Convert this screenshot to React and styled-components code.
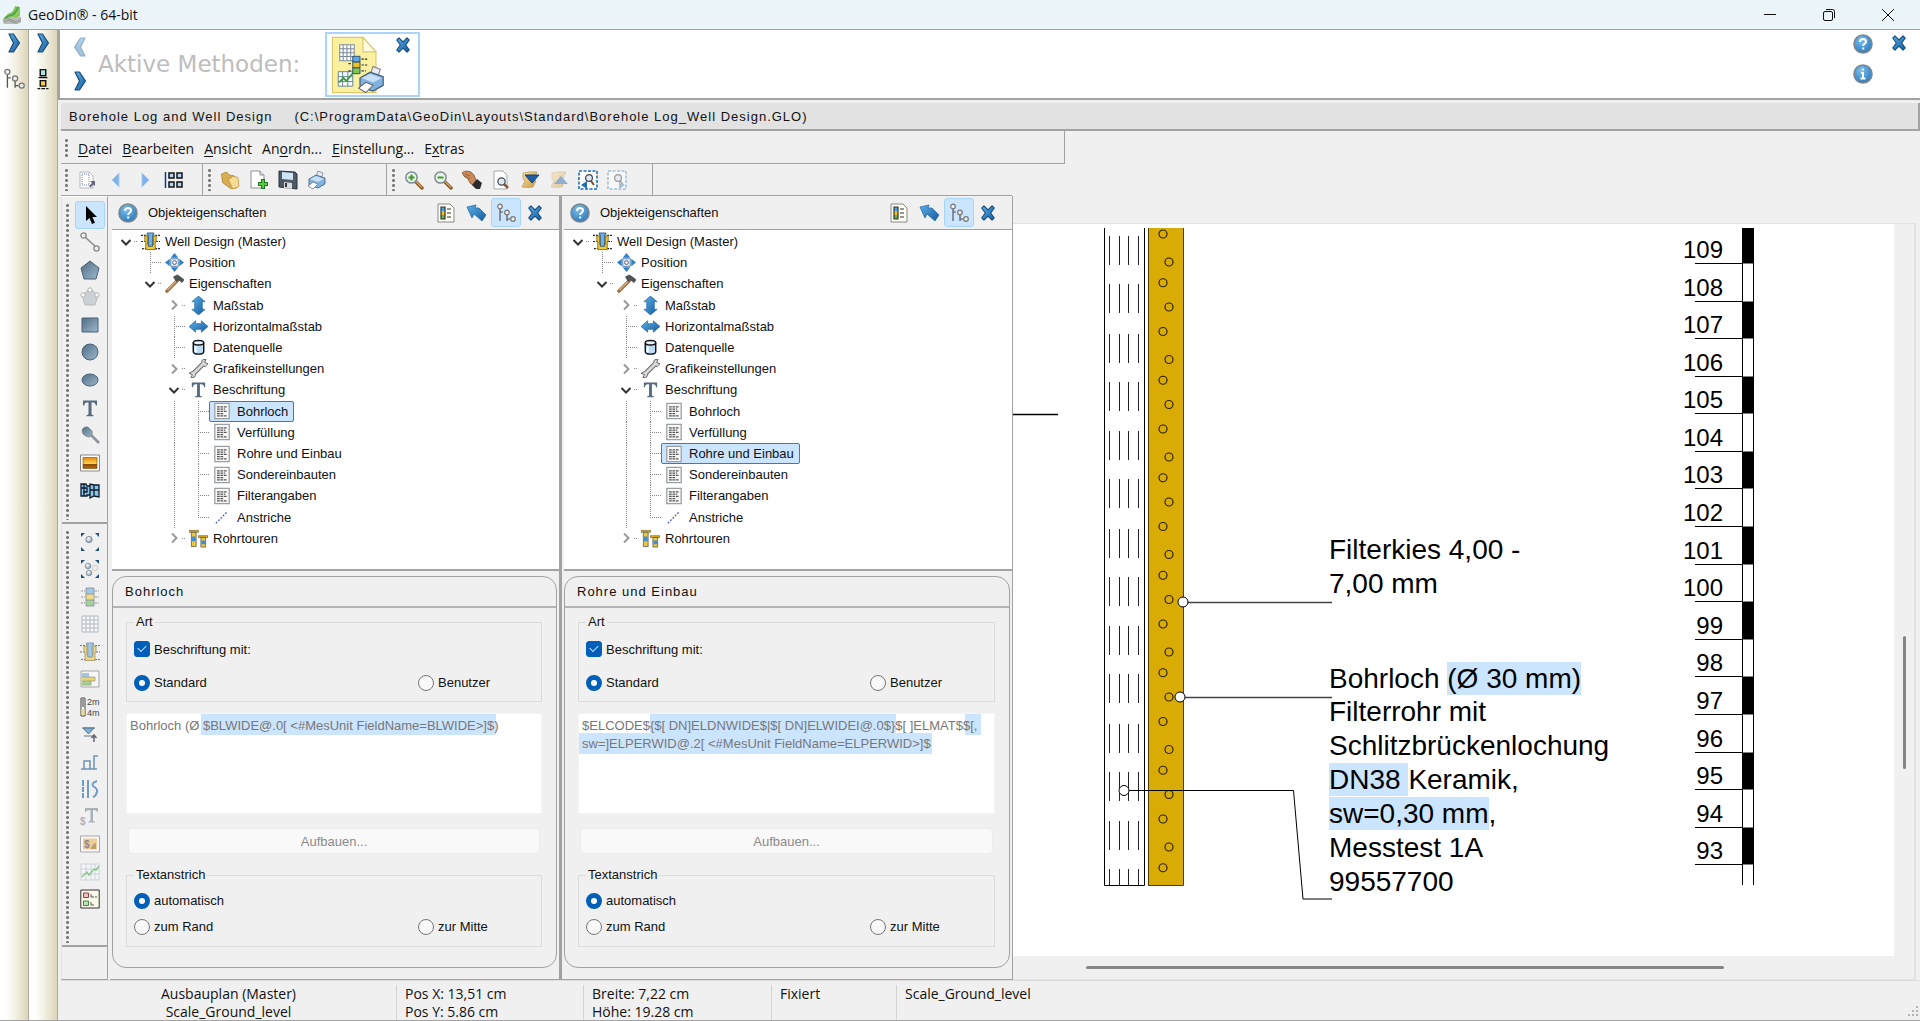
import React, { useState } from "react";
import styled, { createGlobalStyle, css } from "styled-components";

const UI = '"Open Sans", "Noto Sans", sans-serif';
const ARIAL = '"Liberation Sans", Arial, sans-serif';
const LINE = "#a2a2a2";
const FACE = "#f0f0f0";
const MARK = "#cce5ff";

const GlobalStyle = createGlobalStyle`
  *, *::before, *::after { box-sizing: border-box; }
  body { margin: 0; background: ${FACE}; color: #111; font-family: ${ARIAL}; font-size: 13px; }
  button, input, textarea { font: inherit; color: inherit; }
  button { background: none; border: 0; padding: 0; margin: 0; }
  svg { display: block; flex: none; }
`;

/* ---------- icons ---------- */

const Defs = () => (
  <svg width="0" height="0" style={{ position: "absolute" }} aria-hidden="true">
    <defs>
      <linearGradient id="blue" x1="0" y1="0" x2="1" y2="1">
        <stop offset="0" stopColor="#5bb0e8" /><stop offset="1" stopColor="#165a9c" />
      </linearGradient>
      <linearGradient id="slate" x1="0" y1="0" x2="1" y2="1">
        <stop offset="0" stopColor="#4f6d85" /><stop offset="1" stopColor="#9db8cc" />
      </linearGradient>
      <linearGradient id="gold" x1="0" y1="0" x2="1" y2="1">
        <stop offset="0" stopColor="#f8e3a8" /><stop offset="1" stopColor="#c9963c" />
      </linearGradient>
      <linearGradient id="sunset" x1="0" y1="0" x2="0" y2="1">
        <stop offset="0" stopColor="#e08a10" /><stop offset=".55" stopColor="#ffd24a" />
        <stop offset=".62" stopColor="#8a4a08" /><stop offset="1" stopColor="#b86a10" />
      </linearGradient>
      <radialGradient id="ball" cx=".4" cy=".3" r=".8">
        <stop offset="0" stopColor="#7cc0f0" /><stop offset="1" stopColor="#2273b8" />
      </radialGradient>
      <radialGradient id="pearl" cx=".4" cy=".35" r=".7">
        <stop offset="0" stopColor="#fff" /><stop offset="1" stopColor="#8094a6" />
      </radialGradient>
    </defs>
  </svg>
);

const wellPipe = (
  <>
    <path d="M0 3.500h5M0 10h4M1 17.500h4M15 3.500h5M16 10h4M15 17.500h5" stroke="#222" strokeWidth="1.200" strokeDasharray="2 1" fill="none" />
    <path d="M4 4h3v9h6V4h3v6h-1v8.500H5V10H4z" fill="#f0c830" stroke="#6b5410" strokeWidth=".8" />
    <path d="M6.500 1h7v2h-1.300v12H7.800V3H6.500z" fill="#6db2e6" stroke="#24486b" strokeWidth=".8" />
  </>
);
const printer = (
  <>
    <path d="M9 7l2-6 5 2-2 6z" fill="#e8ecf0" stroke="#778" strokeWidth=".7" />
    <path d="M2 9l7-4 9 3v6l-7 4-9-3z" fill="#7fb2df" stroke="#3d5a78" strokeWidth=".8" />
    <path d="M3 9l6-3 8 3-6 3z" fill="#c8def2" />
    <path d="M1 16l5-4 5 2-5 5z" fill="#fff" stroke="#667" strokeWidth=".7" />
  </>
);
const lens = (sign) => (
  <>
    <path d="M11 11l7 7" stroke="#8a5a28" strokeWidth="3.400" strokeLinecap="round" />
    <path d="M11.500 11l6 6" stroke="#d9a566" strokeWidth="1.200" strokeLinecap="round" />
    <circle cx="7.500" cy="7.500" r="5.600" fill="#eaf5ea" stroke="#7d8a92" strokeWidth="1.500" />
    {sign && <path d={sign} stroke="#3a9a2e" strokeWidth="2" />}
  </>
);
const smallLens = (
  <>
    <path d="M13 11l3 4" stroke="#7a4a28" strokeWidth="2" />
    <circle cx="11" cy="8" r="3.400" fill="#dfeaf4" stroke="#445" strokeWidth="1.200" />
  </>
);
const layer = (
  <path d="M3 3q7-2 14-1l-3 7 2 2-3 6q-6 1-11 0l3-6-2-2z" fill="url(#gold)" stroke="#b98a4a" strokeWidth=".6" />
);
const logColumn = (
  <>
    <path d="M1 4h4M1 10h4M1 16h4M15 4h4M15 10h4M15 16h4" stroke="#555" strokeDasharray="2 1" />
    <path d="M6 1h8v6H6z" fill="#6db2e6" /><path d="M6 7h8v6H6z" fill="#f0d040" /><path d="M6 13h8v6H6z" fill="#76c060" />
    <path d="M6 1h8v18H6zM6 7h8M6 13h8" fill="none" stroke="#446" strokeWidth=".8" />
  </>
);
const corners = (
  <path d="M1 5V1h4zM15 1h4v4zM19 15v4h-4zM5 19H1v-4z" fill="#24507c" />
);

const shapes = {
  logo: (<>
    <path d="M1 13l8-3 10 2v5l-6 2H2z" fill="#b9bdb8" />
    <path d="M1 15q5-3 9 0t9-1M1 17q6-3 10 0t8-1" stroke="#85898a" fill="none" strokeWidth=".8" />
    <path d="M2 14q3-6 6-6 3-1 5-7l5 1v9q-4 2-7 1-5 0-9 3z" fill="#8cc95a" />
    <path d="M3 13q5-3 7-3 4-2 6-8" stroke="#3fa34a" strokeWidth="1.600" fill="none" />
  </>),
  chevron: <path d="M5 1h4.500l6 9-6 9H5l4.500-9z" fill="url(#blue)" stroke="#1b4a78" strokeWidth="1.200" strokeLinejoin="round" />,
  nodes: (<>
    <path d="M4 6v12M4 9h3M11 12v6M11 16h3" stroke="#555" fill="none" strokeWidth="1.200" />
    <g fill="#eee" stroke="#777" strokeWidth="1.200"><circle cx="4" cy="3.500" r="2.300" /><circle cx="11" cy="9.500" r="2.300" /><circle cx="17" cy="16" r="2.300" /></g>
  </>),
  column: (<>
    <path d="M6 8.700h8M5 18.700h2.500M13 18.700h2M8.500 18.700h3.500" stroke="#111" strokeWidth="1.200" />
    <path d="M7.500 1.500h5V7h-5z" fill="#a7e6e0" stroke="#111" strokeWidth="1.300" /><path d="M7.500 11.500h5v5h-5z" fill="#ffc83c" stroke="#111" strokeWidth="1.300" />
  </>),
  close: <path d="M3 4.500L5.500 2 10 6.500 14.500 2 17 4.500 13 10l4 5.500-2.500 2.500L10 13.500 5.500 18 3 15.500 7 10z" fill="url(#blue)" stroke="#154a7c" strokeWidth="1.200" strokeLinejoin="round" />,
  help: (<>
    <circle cx="10" cy="10" r="9" fill="url(#ball)" stroke="#7b868e" strokeWidth="1.600" />
    <path d="M7 8q0-3 3-3t3 2.600q0 1.400-1.600 2.200Q10.200 10.500 10.200 12M10.200 13.600v2" stroke="#fff" strokeWidth="2" fill="none" />
  </>),
  info: (<>
    <circle cx="10" cy="10" r="9" fill="url(#ball)" stroke="#7b868e" strokeWidth="1.600" />
    <path d="M10 4.500v2M8 9h2v5M7.500 14.500h5" stroke="#fff" strokeWidth="2" fill="none" />
  </>),
  method: (<>
    <path d="M.5.500h10.500l4.500 5v14H.500z" fill="#fbf0a0" stroke="#d8c870" strokeWidth=".4" />
    <path d="M11 .5v5h4.500z" fill="#fffbe0" stroke="#d8c870" strokeWidth=".4" />
    <path d="M3 3h5v5.500H3zM4.200 3v5.500M5.500 3v5.500M6.800 3v5.500M3 4.400h5M3 5.800h5M3 7.100h5" fill="#fff" stroke="#7a8a98" strokeWidth=".35" />
    <path d="M2.500 12.300h5v5h-5zM4 12.300v5M5.800 12.300v5M2.500 14h5M2.500 15.700h5" fill="#f4fafc" stroke="#5a7a88" strokeWidth=".3" />
    <path d="M2.800 16l1.500-1.500 1 1 2-2.500" stroke="#3c9a3c" strokeWidth=".6" fill="none" />
    <path d="M7.500 7h2.500v2H7.500z" fill="#5aa8e6" stroke="#246" strokeWidth=".3" />
    <path d="M7.500 9h2.500v2H7.500z" fill="#f2c21c" stroke="#246" strokeWidth=".3" />
    <path d="M7.500 11h2.500v2H7.500z" fill="#7cc850" stroke="#246" strokeWidth=".3" />
    <path d="M10.500 8h2M10.500 10h2M10.500 12h1.500M6 9.500h1.200M6 12h1.200" stroke="#333" strokeWidth=".4" strokeDasharray=".8 .4" />
    <g transform="translate(9 10) scale(.5)">{printer}</g>
  </>),
  newPage: (<>
    <path d="M3 2h9l4 4v12H3z" fill="#fff" stroke="#b5bbc4" />
    <path d="M5 4h7v11H5z" fill="none" stroke="#6c78d8" strokeDasharray="1 1" />
    <path d="M18 11v5l-1.500-1.500-3 3-1.500-1.500 3-3L13 11z" fill="#667" />
  </>),
  prev: <path d="M13 3v14L6 10z" fill="#7fb2ea" stroke="#a9caf0" />,
  next: <path d="M7 3v14l7-7z" fill="#7fb2ea" stroke="#a9caf0" />,
  gridView: (<>
    <path d="M1.500 2v16" stroke="#1030a0" strokeWidth="1.500" />
    <path d="M5 3h5v5H5zM13 3h5v5h-5zM5 12h5v5H5zM13 12h5v5h-5z" fill="#b8d4f4" stroke="#111" strokeWidth="1.500" />
  </>),
  open: (<>
    <path d="M1.500 4l5-2 3 3 5 1 2 12-6 .5-8-6z" fill="#d9ae50" stroke="#a67a28" strokeWidth=".7" />
    <path d="M8 9l3-1 1-2 6 1.500 1 9-6 2.500z" fill="#f7dc96" stroke="#b98d3c" strokeWidth=".7" />
  </>),
  addPage: (<>
    <path d="M2 1h9l4 4v13H2z" fill="#fff" stroke="#8a8f96" /><path d="M11 1v4h4" fill="#dde" stroke="#8a8f96" />
    <path d="M14 9v10M9 14h10" stroke="#1f7a1f" strokeWidth="4" /><path d="M14 10v8M10 14h8" stroke="#58c840" strokeWidth="2" />
  </>),
  save: (<>
    <path d="M1 1l16 1 2 2v15L1 17z" fill="#4d5964" stroke="#2c343c" /><path d="M4 2l11 1v7L4 9z" fill="#cfe4f6" />
    <path d="M6 12l8 1v6l-8-1z" fill="#d6dade" /><path d="M8 13v4" stroke="#333" strokeWidth="2" />
  </>),
  print: printer,
  zoomIn: lens("M7.500 4.500v6M4.500 7.500h6"),
  zoomOut: lens("M4.500 7.500h6"),
  hand: (<>
    <path d="M0 3q2-2 5-2l4 1 3 3 2 5-2 6-4-3-2-4-4-3z" fill="#c98a58" stroke="#7a4a24" strokeWidth=".7" />
    <path d="M3 4l5 2M2 6l6 3" stroke="#7a4a24" strokeWidth=".6" />
    <path d="M10 15l5-6 5 4-2 6h-4z" fill="#2c2c30" />
  </>),
  pageLens: (<>
    <path d="M3 1h9l4 4v14H3z" fill="#fff" stroke="#a3a8ae" /><path d="M13 14l4 4" stroke="#8a5a38" strokeWidth="2.500" />
    <circle cx="10.500" cy="11.500" r="3.600" fill="#dfeaf4" stroke="#445" strokeWidth="1.200" />
  </>),
  layerDown: <>{layer}<path d="M5 5h14l-7 8z" fill="#1f5fa8" stroke="#123f74" /></>,
  layerUp: <g opacity=".45">{layer}<path d="M5 14h14l-7-8z" fill="#1f5fa8" /></g>,
  zoomPrev: (<>
    <path d="M1 1h18v18H1z" fill="#fff" stroke="#1f6fb4" strokeDasharray="3 1.500" strokeWidth="1.600" />
    {smallLens}<path d="M9 11v8l-6-4z" fill="#1f6fb4" />
  </>),
  zoomNext: (<g opacity=".5">
    <path d="M1 1h18v18H1z" fill="#fff" stroke="#5a92c4" strokeDasharray="3 1.500" strokeWidth="1.600" />
    {smallLens}<path d="M12 11v8l6-4z" fill="#5a92c4" />
  </g>),
  pointer: <path d="M6 1v15l3.500-3 2.500 6 3-1.200-2.600-5.800h4.600z" fill="#000" />,
  segment: (<>
    <path d="M4 4l13 12" stroke="#888" strokeWidth="1.500" />
    <circle cx="3.500" cy="3.500" r="2.600" fill="#eee" stroke="#888" strokeWidth="1.300" /><circle cx="16.500" cy="16.500" r="2.600" fill="#eee" stroke="#888" strokeWidth="1.300" />
  </>),
  pentagon: <path d="M10 1l9 7-3 11H4L1 8z" fill="url(#slate)" stroke="#4a6074" />,
  pentagonEdit: (<g opacity=".6">
    <path d="M10 2l8 6-3 10H5L2 8z" fill="#b4bcc2" stroke="#999" />
    <circle cx="10" cy="3" r="2.200" fill="#fff" stroke="#888" /><circle cx="3" cy="8" r="2.200" fill="#fff" stroke="#888" /><circle cx="17" cy="8" r="2.200" fill="#fff" stroke="#888" />
  </g>),
  rect: <path d="M2 3h16v14H2z" fill="url(#slate)" stroke="#4a6074" />,
  circle: <circle cx="10" cy="10" r="8" fill="url(#slate)" stroke="#4a6074" />,
  ellipse: <ellipse cx="10" cy="10" rx="8" ry="6" fill="url(#slate)" stroke="#4a6074" />,
  letter: <path d="M3 2.500h14v5h-1.200q-.3-3-2.800-3h-1.500v11.500q0 1 2 1.200v1H6.500v-1q2-.2 2-1.200V4.500H7q-2.500 0-2.800 3H3z" fill="#566b7f" />,
  pin: (<>
    <path d="M10 9l9 9" stroke="#8b949c" strokeWidth="2.500" />
    <path d="M2 5q2-4 6-3l4 4q1 5-3 6-3 0-6-3z" fill="url(#slate)" stroke="#777" strokeWidth=".7" />
  </>),
  picture: <><path d="M.5 2h19v16H.500z" fill="#fff" stroke="#888" /><path d="M3 4.500h14v11H3z" fill="url(#sunset)" stroke="#704808" strokeWidth=".6" /></>,
  film: <path d="M1 4h5l1 2h3V4l4 1h5v12l-5-1-4 2v-3H7v1H1zM1 8h6v4H3M10 6v10M10 10h9M14 5v11M4 4v12" fill="#8cc4ec" stroke="#0c1a28" strokeWidth="1.300" />,
  focusOne: <>{corners}<circle cx="9" cy="7.500" r="3.200" fill="url(#pearl)" stroke="#678" strokeWidth=".7" /></>,
  focusMany: (<>{corners}
    <g stroke="#678" strokeWidth=".6"><circle cx="8" cy="7" r="2.800" fill="url(#pearl)" /><circle cx="9" cy="14" r="2.800" fill="url(#pearl)" /><circle cx="15" cy="9" r="2.800" fill="#eee" stroke="#bbb" /></g>
  </>),
  logColumn,
  table: <path d="M2 2h16v16H2zM6 2v16M10 2v16M14 2v16M2 6h16M2 10h16M2 14h16" fill="#fdfdfd" stroke="#8494a4" />,
  wellPipe,
  bars: (<>
    <path d="M1 2h18v16H1z" fill="#fafafa" stroke="#777" />
    <path d="M2 4h7v4H2z" fill="#6cacdc" /><path d="M2 8h13v4H2z" fill="#e4c020" /><path d="M2 12h9v4H2z" fill="#6cc050" />
    <path d="M2 8h13v4H2M2 16h9v-4" fill="none" stroke="#6a6a40" strokeWidth=".8" />
  </>),
  scale: (<>
    <path d="M1 1h4v18H1z" fill="#fff" stroke="#444" /><path d="M1.500 2h3v8h-3z" fill="#999" /><path d="M1.500 12h3v6h-3z" fill="#f2dc90" />
    <text x="7" y="8" fontFamily={ARIAL} fontSize="9" fill="#444">2m</text><text x="7" y="19" fontFamily={ARIAL} fontSize="9" fill="#444">4m</text>
  </>),
  level: (<>
    <path d="M2 4h13M4 12h9" stroke="#678" strokeWidth="1.200" /><path d="M3 4h11l-5.500 6z" fill="#7fb0d4" stroke="#4a7090" />
    <path d="M14 18v-6M11.500 14l2.500-3 2.500 3" stroke="#667" strokeWidth="1.500" fill="none" />
  </>),
  steps: <path d="M1 17h16M4 17V9h6v8M14 17V4h4" fill="none" stroke="#6f94b4" strokeWidth="1.500" />,
  curve: <path d="M3 1v6M3 8v5M3 14v5M8 1v18M17 2q-6 2-4 5 5 3 4 6-1 4-4 5" fill="none" stroke="#6f9cc4" strokeWidth="2" />,
  dollarText: (<g fill="#7c8894">
    <path d="M5 1h13v4h-1q0-2-3.500-2h-.5v10q0 1.500 2 1.500v1H8.500v-1q2 0 2-1.500V3Q6 3 6 5H5z" />
    <text x="0" y="18" fontFamily={ARIAL} fontSize="10" fontWeight="700">$</text>
  </g>),
  dollarImage: (<>
    <path d="M.5 2h19v16H.500z" fill="#fff" stroke="#777" /><path d="M3 4.500h14v11H3z" fill="#e8b860" />
    <path d="M11 14q2-5 5-5v6h-5z" fill="#a06a20" /><text x="4" y="14" fontFamily={ARIAL} fontSize="10" fontWeight="700" fill="#445">$</text>
  </>),
  chart: <><path d="M1 2h18v16H1zM6 2v16M11 2v16M15 2v16M1 7h18M1 12h18" fill="#f4f8fa" stroke="#a8b8c0" strokeWidth=".8" /><path d="M2 15l5-5 2 3 5-6 2 1 3-4" fill="none" stroke="#4aa84a" strokeWidth="1.400" /></>,
  legend: (<>
    <path d="M.8 1h18.400v18H.800z" fill="#fbf9e8" stroke="#333" />
    <path d="M3.500 4h5v4.500h-5z" fill="#f2c0c0" stroke="#844" /><path d="M3.500 12h5v4.500h-5z" fill="#b8e4b8" stroke="#484" />
    <path d="M11 5v3h3M11 13v3h3M15 8h2" stroke="#555" fill="none" />
  </>),
  props: (<>
    <path d="M2 1h12l4 4v14H2z" fill="#fffef4" stroke="#888" /><path d="M5 4h4v4H5z" fill="#4aa8e8" /><path d="M5 8h4v4H5z" fill="#f2c21c" /><path d="M5 12h4v4H5z" fill="#5cb848" />
    <path d="M5 4h4v12H5zM11 6h4M11 10h4M11 14h4" stroke="#333" fill="none" strokeWidth="1.200" />
  </>),
  arrow: <path d="M1 4l9-2-1 3h4l7 7-4 6-8-7-2 4z" fill="url(#blue)" stroke="#2a6aa8" strokeWidth=".8" />,
  position: (<>
    <path d="M10 0l4 5H6zM10 20l4-5H6zM0 10l5-4v8zM20 10l-5-4v8z" fill="#2f7fc4" /><path d="M6 6h8v8H6z" fill="#e4eef6" stroke="#5a8ab4" />
    <circle cx="10" cy="10" r="2" fill="#fff" stroke="#556" />
  </>),
  hammer: (<>
    <path d="M2 18L13 7" stroke="#9c6c3c" strokeWidth="3.600" strokeLinecap="round" /><path d="M2.500 17L13 6.500" stroke="#e2b888" strokeWidth="1.300" />
    <path d="M9 3l4-2 3 2 4 3-2 3-4-3-2 2-2-3z" fill="#50555a" stroke="#26282a" strokeWidth=".6" />
  </>),
  vertical: <path d="M10 0l7 6h-3v8h3l-7 6-7-6h3V6H3z" fill="url(#blue)" stroke="#2a70b0" strokeWidth=".8" />,
  horizontal: <path d="M0 10l7-6v3h6V4l7 6-7 6v-3H7v3z" fill="url(#blue)" stroke="#2a70b0" strokeWidth=".8" />,
  database: (<>
    <path d="M4.500 5v9.500q0 2.500 5.500 2.500t5.500-2.500V5" fill="#bcdcf6" stroke="#111" strokeWidth="1.500" /><ellipse cx="10" cy="5" rx="5.500" ry="2.300" fill="#e8f4fc" stroke="#111" strokeWidth="1.500" />
    <path d="M7 9v6" stroke="#fff" strokeWidth="2" />
  </>),
  wrench: (<>
    <path d="M5 15L15 5" stroke="#666" strokeWidth="5" />
    <path d="M0 15l4-2 3 3-1 3-4 1 1.500-3.500zM13 5l1-4 4-1-1.500 3.500L20 5l-3 3-3-1z" fill="#d8d8d8" stroke="#666" />
    <path d="M4.500 15.500L15.500 4.500" stroke="#d8d8d8" strokeWidth="3" />
  </>),
  textBlock: (<>
    <path d="M2 1.500h16v17H2z" fill="#f8f8f8" stroke="#9a9fa4" strokeWidth="1.400" />
    <path d="M4.500 5.500h11M4.500 8h9M4.500 10.500h11M4.500 13h7M4.500 15.500h11" stroke="#555" strokeWidth="1.300" strokeDasharray="3 .8" />
  </>),
  dashed: <path d="M3 16L15 4" stroke="#4858c0" strokeWidth="1.300" strokeDasharray="2 1.500" />,
  casings: (<>
    <path d="M0 1.500h10v2H0zM10 7h10v2H10z" fill="#d8a818" stroke="#6b5410" strokeWidth=".6" />
    <path d="M2.500 3.500h5v15h-5zM12.500 9h5v10h-5z" fill="#f0c830" stroke="#555" strokeWidth=".8" /><path d="M3 8h4v5H3zM13 12h4v4h-4z" fill="#3f8fd8" />
  </>),
};

const Icon = ({ name, size = 20 }) => (
  <svg width={size} height={size} viewBox="0 0 20 20" aria-hidden="true">{shapes[name]}</svg>
);

/* ---------- window frame ---------- */

const Window = styled.div`
  height: 100vh;
  min-height: 1020px;
  display: flex;
  flex-direction: column;
  overflow: hidden;
  border-bottom: 1px solid ${LINE};
`;
const TitleBar = styled.header`
  height: 30px;
  display: flex;
  align-items: center;
  gap: 6px;
  padding: 0 25px 0 2px;
  background: #ebf4f8;
  border-bottom: 1px solid ${LINE};
  font-family: ${UI};
  font-size: 14px;
`;
const Title = styled.h1`
  flex: 1;
  margin: 0;
  font-size: 14px;
  font-weight: 400;
`;
const WindowButtons = styled.div`
  display: flex;
  gap: 45px;
`;
const Body = styled.div`
  flex: 1;
  display: flex;
  min-height: 0;
`;
const SideStrip = styled.aside`
  width: 29px;
  display: flex;
  flex-direction: column;
  align-items: center;
  gap: 15px;
  padding-top: 3px;
  border-right: 1px solid #a9a9a0;
  background: linear-gradient(90deg, #fff 20%, #f3f1e4 55%, #ddd8bc 95%);
`;
const Main = styled.main`
  flex: 1;
  min-width: 0;
  display: flex;
  flex-direction: column;
  padding-left: 3px;
`;
const MethodBar = styled.section`
  height: 70px;
  margin-left: -3px;
  display: flex;
  align-items: center;
  background: #fff;
  border: solid ${LINE};
  border-width: 0 0 2px 2px;
  padding: 0 10px;
`;
const Stack = styled.div`
  display: flex;
  flex-direction: column;
  gap: 14px;
`;
const Flip = styled.button`
  opacity: 0.45;
  transform: scaleX(-1);
`;
const MethodTitle = styled.h2`
  margin: 0 25px 0 8px;
  color: #bdbdbd;
  font: 400 23px/28px "DejaVu Sans", sans-serif;
`;
const MethodCard = styled.div`
  display: flex;
  width: 95px;
  height: 65px;
  padding: 2px 6px 3px 4px;
  justify-content: space-between;
  align-items: flex-start;
  border: 2px solid #abd4fa;
`;
const CornerTools = styled.div`
  align-self: flex-start;
  margin: 4px 0 0 auto;
  display: grid;
  grid-template-columns: 20px 20px;
  gap: 10px 17px;
`;
const Caption = styled.h3`
  margin: 3px 0 0;
  height: 28px;
  padding: 0 8px;
  display: flex;
  align-items: center;
  gap: 22px;
  background: #e2e2e2;
  border: 1px solid ${LINE};
  border-width: 0 2px 2px 0;
  font-size: 13px;
  font-weight: 400;
  letter-spacing: 1px;
`;
const Grip = styled.span`
  width: 3px;
  align-self: stretch;
  margin: ${(p) => p.$inset || 4}px 0;
  background: radial-gradient(circle, #777 1px, transparent 2px) 0 0 / 3px 5px repeat-y;
`;
const MenuBar = styled.nav`
  height: 33px;
  width: 1004px;
  max-width: 100%;
  display: flex;
  align-items: center;
  gap: 10px;
  padding: 3px 0 0 4px;
  border: 1px solid ${LINE};
  border-width: 0 1px 1px 0;
  font-family: ${UI};
  font-size: 14px;
  button { text-underline-offset: 2px; }
`;
const ToolRow = styled.div`
  height: 32px;
  width: 951px;
  display: flex;
  border-bottom: 1px solid ${LINE};
`;
const ToolGroup = styled.div`
  width: ${(p) => p.$width}px;
  display: flex;
  align-items: center;
  gap: 9px;
  padding-left: ${(p) => p.$pad || 4}px;
  border-right: 1px solid ${LINE};
`;
const Workspace = styled.div`
  flex: 1;
  min-height: 0;
  display: flex;
  border-bottom: 1px solid #dcdcdc;
`;

/* ---------- palette ---------- */

const Palette = styled.div`
  width: 47px;
  margin-right: 2px;
  display: flex;
  flex-direction: column;
  border: 1px solid ${LINE};
  border-top-color: #fff;
  border-left-color: #e4e4e4;
`;
const PaletteGroup = styled.div`
  display: flex;
  gap: 6px;
  height: ${(p) => p.$height}px;
  padding: 4px 0 0 4px;
  border-bottom: 2px solid ${LINE};
`;
const PaletteGrid = styled.div`
  display: grid;
  height: ${(p) => p.$height}px;
  width: 30px;
  grid-auto-rows: 1fr;
`;
const ToolButton = styled.button`
  display: grid;
  place-items: center;
  border: 1px solid transparent;
  border-radius: 3px;
  ${(p) => p.$on && css`background: ${MARK}; border-color: #a6d4fa;`}
  ${(p) => p.$faded && css`opacity: 0.6;`}
`;

/* ---------- property panels ---------- */

const Panel = styled.section`
  width: ${(p) => (p.$last ? 451 : 452)}px;
  padding-left: 2px;
  display: flex;
  flex-direction: column;
  border: solid ${LINE};
  border-width: 0 ${(p) => (p.$last ? 1 : 3)}px 1px 0;
`;
const PanelHeader = styled.header`
  height: 34px;
  display: flex;
  align-items: center;
  gap: 10px;
  padding: 0 15px 0 6px;
  border-bottom: 1px solid ${LINE};
`;
const PanelTitle = styled.h2`
  flex: 1;
  margin: 0;
  font-size: 13px;
  font-weight: 400;
`;
const HeaderButton = styled(ToolButton)`
  width: 30px;
  height: 29px;
  margin: 0 -5px;
`;
const HeaderTools = styled.div`
  display: flex;
  align-items: center;
  gap: 10px;
`;
const Tree = styled.ul`
  margin: 0;
  padding: 1px 0 20px 2px;
  height: 341px;
  list-style: none;
  display: grid;
  grid-auto-rows: 1fr;
  background: #fff;
  border-bottom: 2px solid ${LINE};
`;
const TreeRow = styled.li`
  display: flex;
  align-items: stretch;
  min-height: 0;
`;
const Guide = styled.span`
  width: 24px;
  display: flex;
  align-items: center;
  justify-content: center;
  background-repeat: no-repeat;
  ${(p) => p.$kind === "line" && css`
    background-image: repeating-linear-gradient(#888 0 1px, transparent 1px 2px);
    background-size: 1px 100%;
    background-position: 12px 0;
  `}
  ${(p) => (p.$kind === "tee" || p.$kind === "end") && css`
    background-image: repeating-linear-gradient(#888 0 1px, transparent 1px 2px),
      repeating-linear-gradient(90deg, #888 0 1px, transparent 1px 2px);
    background-size: 1px ${p.$kind === "tee" ? "100%" : "50%"}, 12px 1px;
    background-position: 12px 0, 12px 50%;
  `}
  ${(p) => (p.$kind === "open" || p.$kind === "shut") && css`
    background-image: repeating-linear-gradient(90deg, #888 0 1px, transparent 1px 2px);
    background-size: 4px 1px;
    background-position: 20px 50%;
  `}
`;
const Node = styled.button`
  display: flex;
  align-items: center;
  gap: 4px;
  min-height: 0;
  padding: 0 5px 0 1px;
  border: 1px solid transparent;
  border-radius: 2px;
  margin-left: -1px;
  overflow: visible;
  ${(p) => p.$on && css`background: ${MARK}; border-color: #1c84dc;`}
`;
const NodeIcon = styled.span`
  width: 22px;
  display: grid;
  place-items: center;
`;
const Card = styled.form`
  margin: 5px 2px 11px 0;
  flex: 1;
  border: 1px solid ${LINE};
  border-radius: 14px;
`;
const CardTitle = styled.h3`
  margin: 0 0 5px;
  height: 31px;
  padding: 1px 12px 0;
  font-size: 13px;
  line-height: 28px;
  font-weight: 400;
  letter-spacing: 1px;
  border-bottom: 2px solid #b4b4b4;
`;
const CardBody = styled.div`
  padding: 0 14px 0 13px;
`;
const Group = styled.fieldset`
  margin: 0;
  min-width: 0;
  height: ${(p) => p.$height}px;
  padding: 0 7px;
  border: 1px solid #dcdcdc;
`;
const Legend = styled.legend`
  padding: 0 2px;
  line-height: 18px;
`;
const OptionRow = styled.div`
  display: grid;
  grid-template-columns: 284px 1fr;
  align-items: center;
  height: ${(p) => p.$height}px;
`;
const Option = styled.label`
  display: flex;
  align-items: center;
  gap: 4px;
`;
const Radio = styled.input.attrs({ type: "radio" })`
  appearance: none;
  width: 16px;
  height: 16px;
  margin: 0;
  border: 1px solid #777;
  border-radius: 50%;
  background: #f8f8f8;
  &:checked { border: 5px solid #005fb8; background: #fff; }
`;
const Check = styled.input.attrs({ type: "checkbox" })`
  appearance: none;
  width: 16px;
  height: 16px;
  margin: 0;
  display: grid;
  place-items: center;
  border: 1px solid #777;
  border-radius: 3px;
  &:checked { background: #005fb8; border-color: #005fb8; }
  &:checked::after {
    content: "";
    width: 8px;
    height: 5px;
    border: solid #cfe4f7;
    border-width: 0 0 1px 1px;
    transform: rotate(-45deg);
    margin-bottom: 3px;
  }
`;
const Formula = styled.textarea`
  display: block;
  width: 100%;
  height: 101px;
  margin: 11px 0 14px;
  padding: 3px 3px;
  border: 1px solid #f4f4f4;
  resize: none;
  outline: none;
  color: #777;
  line-height: 18px;
  background-color: #fff;
  background-repeat: no-repeat;
  background-image: ${(p) => p.$marks.map(() => `linear-gradient(${MARK}, ${MARK})`).join(",")};
  background-position: ${(p) => p.$marks.map((m) => `${m[0]}px ${m[1]}px`).join(",")};
  background-size: ${(p) => p.$marks.map((m) => `${m[2]}px ${m[3]}px`).join(",")};
`;
const BuildButton = styled.button`
  display: block;
  width: calc(100% - 4px);
  height: 26px;
  margin: 0 2px 12px;
  border: 1px solid #ececec;
  border-radius: 4px;
  background: #f9f9f9;
  color: #8a8a8a;
`;

/* ---------- drawing ---------- */

const CanvasFrame = styled.section`
  flex: 1;
  min-width: 0;
  margin: 27px 4px 0 0;
  border: solid #e2e2e2;
  border-width: 1px 2px 1px 0;
  display: grid;
  grid-template: 1fr 23px / 1fr 20px;
`;
const Sheet = styled.div`
  position: relative;
  overflow: hidden;
  background: #fff;
`;
const Label = styled.p`
  position: absolute;
  margin: 0;
  left: ${(p) => p.$x}px;
  top: ${(p) => p.$y}px;
  font-size: 28px;
  line-height: 34px;
  white-space: pre;
  color: #000;
`;
const Mark = styled.mark`
  padding: 1px 0;
  background: ${MARK};
  color: inherit;
`;
const ScrollTrack = styled.div`
  display: flex;
  flex-direction: ${(p) => (p.$vertical ? "column" : "row")};
  align-items: center;
  ${(p) => (p.$vertical ? "padding-top: 412px;" : "padding-left: 73px;")}
`;
const Thumb = styled.span`
  border-radius: 2px;
  background: #868686;
  ${(p) => (p.$vertical ? "width: 3px; height: 133px;" : "height: 3px; width: 79%;")}
`;

/* ---------- status ---------- */

const StatusBar = styled.footer`
  height: 39px;
  padding-top: 4px;
  display: flex;
  font: 14px/18px ${UI};
`;
const StatusCell = styled.div`
  width: ${(p) => p.$width}px;
  padding-left: ${(p) => (p.$center ? 0 : 8)}px;
  text-align: ${(p) => (p.$center ? "center" : "left")};
  border-right: ${(p) => (p.$open ? 0 : 1)}px solid #d4d4d4;
`;
const SizeGrip = styled.span`
  align-self: flex-end;
  margin: 0 2px 4px auto;
`;

/* ---------- data ---------- */

const toolbars = [
  { width: 142, gap: 4, items: ["newPage", "prev", "next", "gridView"] },
  { width: 184, gap: 5, items: ["open", "addPage", "save", "print"] },
  { width: 266, gap: 5, items: ["zoomIn", "zoomOut", "hand", "pageLens", "layerDown", "layerUp", "zoomPrev", "zoomNext"] },
];
const menus = [["", "D", "atei"], ["", "B", "earbeiten"], ["", "A", "nsicht"], ["An", "o", "rdn..."], ["", "E", "instellung..."], ["E", "x", "tras"]];
const drawTools = ["pointer", "segment", "pentagon", "pentagonEdit", "rect", "circle", "ellipse", "letter", "pin", "picture", "film"];
const objectTools = ["focusOne", "focusMany", "logColumn", "table", "wellPipe", "bars", "scale", "level", "steps", "curve", "dollarText", "dollarImage", "chart", "legend"];
const fadedTools = ["logColumn", "table", "wellPipe", "bars", "dollarText", "dollarImage", "chart"];
const treeRows = [
  [["open"], "wellPipe", "Well Design (Master)"],
  [["", "tee"], "position", "Position"],
  [["", "open"], "hammer", "Eigenschaften"],
  [["", "", "shut"], "vertical", "Maßstab"],
  [["", "", "tee"], "horizontal", "Horizontalmaßstab"],
  [["", "", "tee"], "database", "Datenquelle"],
  [["", "", "shut"], "wrench", "Grafikeinstellungen"],
  [["", "", "open"], "letter", "Beschriftung"],
  [["", "", "line", "tee"], "textBlock", "Bohrloch"],
  [["", "", "line", "tee"], "textBlock", "Verfüllung"],
  [["", "", "line", "tee"], "textBlock", "Rohre und Einbau"],
  [["", "", "line", "tee"], "textBlock", "Sondereinbauten"],
  [["", "", "line", "tee"], "textBlock", "Filterangaben"],
  [["", "", "line", "end"], "dashed", "Anstriche"],
  [["", "", "shut"], "casings", "Rohrtouren"],
];

const Expander = ({ open }) => (
  <svg width="12" height="12" viewBox="0 0 12 12" aria-hidden="true">
    <path d={open ? "M1.500 4L6 8.500 10.500 4" : "M4 1.500L8.500 6 4 10.500"} fill="none" stroke={open ? "#333" : "#999"} strokeWidth="2" />
  </svg>
);

function PropertyPanel({ id, title, text, marks, last }) {
  const [value, setValue] = useState(text);
  return (
    <Panel $last={last}>
      <PanelHeader>
        <Icon name="help" size={20} />
        <PanelTitle>Objekteigenschaften</PanelTitle>
        <HeaderTools>
          <button type="button" aria-label="Eigenschaften"><Icon name="props" /></button>
          <button type="button" aria-label="Zurück"><Icon name="arrow" /></button>
          <HeaderButton type="button" $on aria-label="Baum"><Icon name="nodes" /></HeaderButton>
          <button type="button" aria-label="Schließen"><Icon name="close" size={18} /></button>
        </HeaderTools>
      </PanelHeader>
      <Tree>
        {treeRows.map(([guides, icon, label]) => (
          <TreeRow key={label}>
            {guides.map((kind, i) => (
              <Guide key={i} $kind={kind}>
                {(kind === "open" || kind === "shut") && <Expander open={kind === "open"} />}
              </Guide>
            ))}
            <Node type="button" $on={label === title}>
              <NodeIcon><Icon name={icon} size={icon === "textBlock" ? 18 : 19} /></NodeIcon>
              {label}
            </Node>
          </TreeRow>
        ))}
      </Tree>
      <Card>
        <CardTitle>{title}</CardTitle>
        <CardBody>
          <Group $height={89}>
            <Legend>Art</Legend>
            <OptionRow $height={36}>
              <Option><Check defaultChecked />Beschriftung mit:</Option>
            </OptionRow>
            <OptionRow $height={31}>
              <Option><Radio name={id + "art"} defaultChecked />Standard</Option>
              <Option><Radio name={id + "art"} />Benutzer</Option>
            </OptionRow>
          </Group>
          <Formula aria-label="Formel" $marks={marks} value={value} spellCheck={false} onChange={(e) => setValue(e.target.value)} />
          <BuildButton type="button">Aufbauen...</BuildButton>
          <Group $height={81}>
            <Legend>Textanstrich</Legend>
            <OptionRow $height={33}>
              <Option><Radio name={id + "line"} defaultChecked />automatisch</Option>
            </OptionRow>
            <OptionRow $height={19}>
              <Option><Radio name={id + "line"} />zum Rand</Option>
              <Option><Radio name={id + "line"} />zur Mitte</Option>
            </OptionRow>
          </Group>
        </CardBody>
      </Card>
    </Panel>
  );
}

const range = (n) => Array.from({ length: n }, (_, i) => i);

/* Well section, call-out lines and depth scale; x = 0 is the left edge of the sheet. */
function WellDrawing() {
  const slots = range(7).flatMap((k) => [12 + k * 97.5, 60 + k * 97.5]);
  const pebbles = [
    ...range(14).map((k) => [150, 10 + k * 48.75]),
    ...range(7).map((k) => [156, 38 + k * 97.5]),
    ...range(6).map((k) => [156, 83 + k * 97.5]),
  ];
  const tick = (k) => Math.round(39 + k * 37.58) + 0.5;
  return (
    <svg width="882" height="732" fill="none" stroke="#000">
      <path d="M0 190.500h45" strokeWidth="1.500" />
      <path d="M91.500 4v657.500h40V4" />
      {slots.map((y) => (
        <path key={y} d={[96.5, 106.5, 115.5, 125.5].map((x) => `M${x} ${Math.round(y)}V${Math.min(661, Math.round(y) + 29)}`).join("")} stroke="#222" />
      ))}
      <path d="M135 4h35v658h-35z" fill="#d9ac05" stroke="none" />
      <path d="M135.500 4v657.500h35V4" stroke="#4b3c08" />
      {pebbles.map(([x, y]) => <circle key={x + "-" + y} cx={x} cy={y} r="4" stroke="#2c2200" strokeWidth="1.200" />)}
      <path d="M170 378.500h149M167 473.500h152" stroke="#444" strokeWidth="1.400" />
      <path d="M111 566.500h169.500l9.500 108.500h29" />
      <g fill="#fff"><circle cx="170" cy="378" r="5" /><circle cx="167" cy="473" r="5" /><circle cx="111" cy="566.500" r="5" /></g>
      {range(17).map((k) => (
        <g key={k}>
          <path d={`M682 ${tick(k)}h48`} />
          {k % 2 === 0 && <path d={`M729.500 ${k ? tick(k - 1) : 4}h11V${tick(k)}h-11z`} fill="#000" stroke="none" />}
          <text x="710" y={tick(k) - 6} textAnchor="end" fontFamily={ARIAL} fontSize="24" fill="#000" stroke="none">{109 - k}</text>
        </g>
      ))}
      <path d="M729.500 4v657M740.500 4v657" />
    </svg>
  );
}

export default function App() {
  return (
    <Window>
      <GlobalStyle />
      <Defs />
      <TitleBar>
        <Icon name="logo" size={20} />
        <Title>GeoDin® - 64-bit</Title>
        <WindowButtons>
          <button aria-label="Minimieren"><svg width="14" height="14" stroke="#111"><path d="M1 6.500h12" /></svg></button>
          <button aria-label="Verkleinern"><svg width="14" height="14" stroke="#111" fill="none"><rect x="1.500" y="3.500" width="9" height="9" rx="1.500" /><path d="M4 1.500h6.500q2 0 2 2V10" /></svg></button>
          <button aria-label="Fenster schließen"><svg width="14" height="14" stroke="#111"><path d="M1 1l12 12M13 1L1 13" /></svg></button>
        </WindowButtons>
      </TitleBar>
      <Body>
        <SideStrip>
          <Icon name="chevron" size={20} /><Icon name="nodes" size={22} />
        </SideStrip>
        <SideStrip>
          <Icon name="chevron" size={20} /><Icon name="column" size={22} />
        </SideStrip>
        <Main>
          <MethodBar>
            <Stack>
              <Flip aria-label="Vorherige"><Icon name="chevron" size={20} /></Flip>
              <Icon name="chevron" size={20} />
            </Stack>
            <MethodTitle>Aktive Methoden:</MethodTitle>
            <MethodCard>
              <Icon name="method" size={58} />
              <button aria-label="Methode schließen"><Icon name="close" size={18} /></button>
            </MethodCard>
            <CornerTools>
              <Icon name="help" /><Icon name="close" size={18} /><Icon name="info" />
            </CornerTools>
          </MethodBar>
          <Caption>
            <span>Borehole Log and Well Design</span>
            <span>(C:\ProgramData\GeoDin\Layouts\Standard\Borehole Log_Well Design.GLO)</span>
          </Caption>
          <MenuBar>
            <Grip />
            {menus.map(([a, key, b]) => (
              <button key={a + key + b}>{a}<u>{key}</u>{b}</button>
            ))}
          </MenuBar>
          <ToolRow>
            {toolbars.map((bar) => (
              <ToolGroup key={bar.width} $width={bar.width} $pad={bar.gap}>
                <Grip />
                {bar.items.map((name) => <button key={name} aria-label={name}><Icon name={name} /></button>)}
              </ToolGroup>
            ))}
          </ToolRow>
          <Workspace>
            <Palette>
              <PaletteGroup $height={327}>
                <Grip $inset={2} />
                <PaletteGrid $height={303}>
                  {drawTools.map((name, i) => <ToolButton key={name} $on={i === 0} aria-label={name}><Icon name={name} /></ToolButton>)}
                </PaletteGrid>
              </PaletteGroup>
              <PaletteGroup $height={423}>
                <Grip $inset={2} />
                <PaletteGrid $height={385}>
                  {objectTools.map((name) => <ToolButton key={name} $faded={fadedTools.includes(name)} aria-label={name}><Icon name={name} /></ToolButton>)}
                </PaletteGrid>
              </PaletteGroup>
            </Palette>
            <PropertyPanel
              id="left"
              title="Bohrloch"
              text="Bohrloch (Ø $BLWIDE@.0[ <#MesUnit FieldName=BLWIDE>]$)"
              marks={[[74, 0, 295, 21]]}
            />
            <PropertyPanel
              id="right"
              title="Rohre und Einbau"
              text="$ELCODE${$[ DN]ELDNWIDE$|$[ DN]ELWIDEI@.0$}$[ ]ELMAT$$[, sw=]ELPERWID@.2[ <#MesUnit FieldName=ELPERWID>]$"
              marks={[[71, 0, 246, 21], [386, 0, 16, 21], [0, 19, 353, 21]]}
              last
            />
            <CanvasFrame>
              <Sheet>
                <WellDrawing />
                <Label $x={316} $y={309}>{"Filterkies 4,00 -\n7,00 mm"}</Label>
                <Label $x={316} $y={438}>Bohrloch <Mark>(Ø 30 mm)</Mark></Label>
                <Label $x={316} $y={471}>{"Filterrohr mit\nSchlitzbrückenlochung\n"}<Mark>DN38 </Mark>{"Keramik,\n"}<Mark>sw=0,30 mm</Mark>{",\nMesstest 1A\n99557700"}</Label>
              </Sheet>
              <ScrollTrack $vertical><Thumb $vertical /></ScrollTrack>
              <ScrollTrack><Thumb /></ScrollTrack>
            </CanvasFrame>
          </Workspace>
          <StatusBar>
            <StatusCell $width={336} $center>
              <div>Ausbauplan (Master)</div>
              <div>Scale_Ground_level</div>
            </StatusCell>
            <StatusCell $width={187}>
              <div>Pos X: 13,51 cm</div>
              <div>Pos Y: 5.86 cm</div>
            </StatusCell>
            <StatusCell $width={188}>
              <div>Breite: 7,22 cm</div>
              <div>Höhe: 19.28 cm</div>
            </StatusCell>
            <StatusCell $width={125}>Fixiert</StatusCell>
            <StatusCell $width={200} $open>Scale_Ground_level</StatusCell>
            <SizeGrip>
              <svg width="10" height="10" fill="#b4b4b4"><path d="M8 0h2v2H8zM4 4h2v2H4zM8 4h2v2H8zM0 8h2v2H0zM4 8h2v2H4zM8 8h2v2H8z" /></svg>
            </SizeGrip>
          </StatusBar>
        </Main>
      </Body>
    </Window>
  );
}
